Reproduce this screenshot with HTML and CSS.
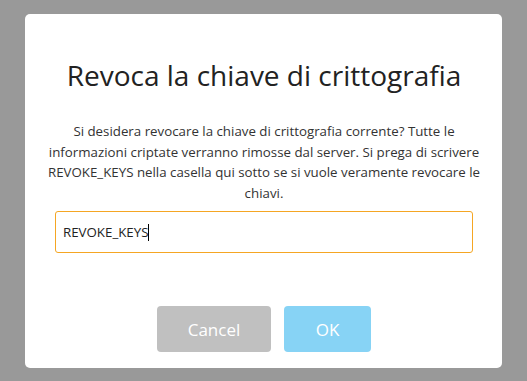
FILE: index.html
```html
<!DOCTYPE html>
<html lang="it">
<head>
  <meta charset="UTF-8">
  <title>Revoca chiave</title>
  <link rel="stylesheet" href="styles.css">
</head>
<body>
  <div class="overlay">
    <div class="modal">
      <h1 class="modal-title">Revoca la chiave di crittografia</h1>
      <p class="modal-text">
        Si desidera revocare la chiave di crittografia corrente? Tutte le informazioni criptate verranno rimosse dal server. Si prega di scrivere REVOKE_KEYS nella casella qui sotto se si vuole veramente revocare le chiavi.
      </p>
      <div class="key-field">REVOKE_KEYS<span class="caret"></span></div>
      <div class="modal-buttons">
        <button class="btn btn-cancel">Cancel</button>
        <button class="btn btn-ok">OK</button>
      </div>
    </div>
  </div>
</body>
</html>
```

FILE: styles.css
```css
body{
  margin: 0;
  background-color: #999999;
  font-family: "Open Sans", "Noto Sans", sans-serif;
}

.overlay{
  padding: 14px 25px 13px;
}

.modal{
  background-color: white;
  border-radius: 5px;
  padding: 0 29px 16px 30px;
  text-align: center;
}

.modal-title{
  margin: 0;
  padding-top: 39px;
  font-size: 28px;
  font-weight: normal;
  color: #222;
  line-height: 44px;
}

.modal-text{
  margin: 24px -12px 0;
  font-size: 13.3px;
  line-height: 20.5px;
  color: #333;
}

.key-field{
  margin-top: 8px;
  height: 40px;
  border: 1px solid #f5a623;
  border-radius: 3px;
  text-align: left;
  padding-left: 7px;
  font-size: 13.3px;
  line-height: 40px;
  color: #222;
}

.caret{
  display: inline-block;
  width: 1px;
  height: 17px;
  background-color: black;
  vertical-align: -4px;
}

.modal-buttons{
  display: flex;
  justify-content: center;
  gap: 13px;
  margin-top: 53px;
}

.btn{
  border: none;
  border-radius: 4px;
  height: 46px;
  color: white;
  font-family: inherit;
  font-size: 17px;
}

.btn-cancel{
  width: 114px;
  background-color: #c0c0c0;
}

.btn-ok{
  width: 87px;
  background-color: #87d3f5;
}
```
